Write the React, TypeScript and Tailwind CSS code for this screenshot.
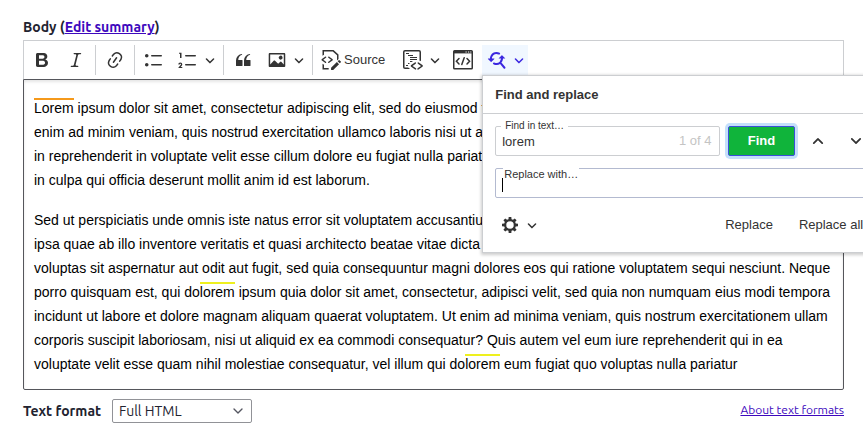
import { useState, type ReactNode } from 'react';
import clsx from 'clsx';
import { ChevronDown } from 'lucide-react';

const ICONS = {
  bold: 'M10.187 17H5.773c-.637 0-1.092-.138-1.364-.415-.273-.277-.409-.718-.409-1.323V4.738c0-.617.14-1.062.419-1.332.279-.27.73-.406 1.354-.406h4.68c.69 0 1.288.041 1.793.124.506.083.96.242 1.36.478.341.197.644.447.906.75a3.262 3.262 0 0 1 .808 2.162c0 1.401-.722 2.426-2.167 3.075C15.05 10.175 16 11.315 16 13.01a3.756 3.756 0 0 1-2.296 3.504 6.1 6.1 0 0 1-1.517.377c-.571.073-1.238.11-2 .11zm-.217-6.217H7v4.087h3.069c1.977 0 2.965-.69 2.965-2.072 0-.707-.256-1.22-.768-1.537-.512-.319-1.277-.478-2.296-.478zM7 5.13v3.619h2.606c.729 0 1.292-.067 1.69-.2a1.6 1.6 0 0 0 .91-.765c.165-.267.247-.566.247-.897 0-.707-.26-1.176-.778-1.409-.519-.232-1.31-.348-2.375-.348H7z',
  italic: 'm9.586 14.633.021.004c-.036.335.095.655.393.962.082.083.173.15.274.201h1.474a.6.6 0 1 1 0 1.2H5.304a.6.6 0 0 1 0-1.2h1.15c.474-.07.809-.182 1.005-.334.157-.122.291-.32.404-.597l2.416-9.55a1.053 1.053 0 0 0-.281-.823 1.12 1.12 0 0 0-.442-.296H8.15a.6.6 0 0 1 0-1.2h6.443a.6.6 0 1 1 0 1.2h-1.195c-.376.056-.65.155-.823.296-.215.175-.423.439-.623.79l-2.366 9.347z',
  link: 'm11.077 15 .991-1.416a.75.75 0 1 1 1.229.86l-1.148 1.64a.748.748 0 0 1-.217.206 5.251 5.251 0 0 1-8.503-5.955.741.741 0 0 1 .12-.274l1.147-1.639a.75.75 0 1 1 1.228.86L4.933 10.7l.006.003a3.75 3.75 0 0 0 6.132 4.294l.006.004zm5.494-5.335a.748.748 0 0 1-.12.274l-1.147 1.639a.75.75 0 1 1-1.228-.86l.86-1.23a3.75 3.75 0 0 0-6.144-4.301l-.86 1.229a.75.75 0 0 1-1.229-.86l1.148-1.64a.748.748 0 0 1 .217-.206 5.251 5.251 0 0 1 8.503 5.955zm-4.563-2.532a.75.75 0 0 1 .184 1.045l-3.155 4.505a.75.75 0 1 1-1.229-.86l3.155-4.506a.75.75 0 0 1 1.045-.184z',
  bullets: 'M7 5.75c0 .414.336.75.75.75h9.5a.75.75 0 1 0 0-1.5h-9.5a.75.75 0 0 0-.75.75zm-6 0C1 4.784 1.777 4 2.75 4c.966 0 1.75.777 1.75 1.75 0 .966-.777 1.75-1.75 1.75C1.784 7.5 1 6.723 1 5.75zm6 9c0 .414.336.75.75.75h9.5a.75.75 0 1 0 0-1.5h-9.5a.75.75 0 0 0-.75.75zm-6 0c0-.966.777-1.75 1.75-1.75.966 0 1.75.777 1.75 1.75 0 .966-.777 1.75-1.75 1.75-.966 0-1.75-.777-1.75-1.75z',
  numbers: 'M7 5.75c0 .414.336.75.75.75h9.5a.75.75 0 1 0 0-1.5h-9.5a.75.75 0 0 0-.75.75zM3.5 3v5H2V3.7H1v-1h2.5V3zM.343 17.857l2.59-3.257H2.92a.6.6 0 1 0-1.04 0H.302a2 2 0 1 1 3.995 0h-.001c-.048.405-.16.734-.333.988-.175.254-.59.692-1.244 1.312H4.3v1h-4l.043-.043zM7 14.75a.75.75 0 0 1 .75-.75h9.5a.75.75 0 1 1 0 1.5h-9.5a.75.75 0 0 1-.75-.75z',
  quote: 'M3 10.423a6.5 6.5 0 0 1 6.056-6.408l.038.67C6.448 5.423 5.354 7.663 5.22 10H9c.552 0 .5.432.5.986v4.511c0 .554-.448.503-1 .503h-5c-.552 0-.5-.449-.5-1.003v-4.574zm8 0a6.5 6.5 0 0 1 6.056-6.408l.038.67c-2.646.739-3.74 2.979-3.873 5.315H17c.552 0 .5.432.5.986v4.511c0 .554-.448.503-1 .503h-5c-.552 0-.5-.449-.5-1.003v-4.574z',
  image: 'M6.91 10.54c.26-.23.64-.21.88.03l3.36 3.14 2.23-2.06a.64.64 0 0 1 .87 0l2.52 2.97V4.5H3.2v10.12l3.71-4.08zm10.27-7.51c.6 0 1.09.47 1.09 1.05v11.84c0 .59-.49 1.06-1.09 1.06H2.79c-.6 0-1.09-.47-1.09-1.06V4.08c0-.58.49-1.05 1.1-1.05h14.38zm-5.22 5.56a1.96 1.96 0 1 1 3.4-1.96 1.96 1.96 0 0 1-3.4 1.96z',
  codeBlock: 'M12.87 12.61a.75.75 0 0 1-.089.976l-.085.07-3.154 2.254 3.412 2.414a.75.75 0 0 1 .237.95l-.057.095a.75.75 0 0 1-.95.237l-.096-.058-4.272-3.022-.003-1.223 4.01-2.867a.75.75 0 0 1 1.047.174zm2.795-.231.095.057 4.011 2.867-.003 1.224-4.272 3.022-.095.058a.75.75 0 0 1-.88-.151l-.07-.086-.058-.095a.75.75 0 0 1 .15-.88l.087-.07 3.412-2.414-3.154-2.253-.085-.071a.75.75 0 0 1 .862-1.207zM16 0a2 2 0 0 1 2 2v9.354l-.663-.492-.837-.001V2a.5.5 0 0 0-.5-.5H2a.5.5 0 0 0-.5.5v15a.5.5 0 0 0 .5.5h3.118L7.156 19H2a2 2 0 0 1-2-2V2a2 2 0 0 1 2-2h14zM5.009 15l.003 1H3v-1h2.009zm2.188-2-1.471 1H5v-1h2.197zM10 11v.095L8.668 12H7v-1h3zm4-2v1H7V9h7zm0-2v1H7V7h7zm-4-2v1H5V5h5zM6 3v1H3V3h3z',
  findReplace: 'm12.87 13.786 1.532-1.286 3.857 4.596a1 1 0 1 1-1.532 1.286l-3.857-4.596z M16.004 8.5a6.5 6.5 0 0 1-9.216 5.905c-1.154-.53-.863-1.415-.663-1.615.194-.194.564-.592 1.635-.141a4.5 4.5 0 0 0 5.89-5.904l-.104-.227 1.331-1.331c.045-.046.196-.041.224.007a6.47 6.47 0 0 1 .903 3.306zm-3.4-5.715c.562.305.742 1.106.354 1.494-.388.388-.995.414-1.476.178a4.5 4.5 0 0 0-6.086 5.882l.114.236-1.348 1.349c-.038.037-.17.022-.198-.023a6.5 6.5 0 0 1 5.54-9.9 6.469 6.469 0 0 1 3.1.784z M4.001 11.93.948 8.877a.2.2 0 0 1 .141-.341h6.106a.2.2 0 0 1 .141.341L4.283 11.93a.2.2 0 0 1-.282 0zm11.083-6.789 3.053 3.053a.2.2 0 0 1-.14.342H11.89a.2.2 0 0 1-.14-.342l3.052-3.053a.2.2 0 0 1 .282 0z',
  cog: 'm11.333 2 .19 2.263a5.899 5.899 0 0 1 1.458.604L14.714 3.4 16.6 5.286l-1.467 1.733c.263.452.468.942.605 1.46L18 8.666v2.666l-2.263.19a5.899 5.899 0 0 1-.604 1.458l1.467 1.733-1.886 1.886-1.733-1.467a5.899 5.899 0 0 1-1.46.605L11.334 18H8.667l-.19-2.263a5.899 5.899 0 0 1-1.458-.604L5.286 16.6 3.4 14.714l1.467-1.733a5.899 5.899 0 0 1-.604-1.458L2 11.333V8.667l2.262-.189a5.899 5.899 0 0 1 .605-1.459L3.4 5.286 5.286 3.4l1.733 1.467a5.899 5.899 0 0 1 1.46-.605L8.666 2h2.666zM10 6.267a3.733 3.733 0 1 0 0 7.466 3.733 3.733 0 0 0 0-7.466z',
};

function Icon({ name }: { name: keyof typeof ICONS }) {
  return (
    <svg viewBox="0 0 20 20" className="size-5 shrink-0" fill="currentColor" aria-hidden="true">
      <path d={ICONS[name]} />
    </svg>
  );
}

function SourceIcon() {
  return (
    <svg viewBox="0 0 20 20" className="size-5 shrink-0" fill="currentColor" aria-hidden="true">
      <path d="m12.5 0 5 4.5v4.6l-1.5 1.3V5.208L11.77 1.516 3 1.5v3.25l-1.5 1V0h11zM1.5 13.75l1.5 1v3.254L7.685 18l-.001 1.504H1.5v-5.754z" />
      <path d="M4.06 6.64a.75.75 0 0 1 .958 1.15l-.085.07L2.29 9.75l2.646 1.89c.302.216.4.62.232.951l-.058.095a.75.75 0 0 1-.951.232l-.095-.058-3.5-2.5V9.14l3.496-2.5zm4.194 6.22a.75.75 0 0 1-.958-1.149l.085-.07 2.643-1.89-2.646-1.89a.75.75 0 0 1-.232-.952l.058-.095a.75.75 0 0 1 .95-.232l.096.058 3.5 2.5v1.22l-3.496 2.5zm7.644-.836 2.122 2.122-5.825 5.809-2.125-.005.003-2.116zm2.539-1.847 1.414 1.414a.5.5 0 0 1 0 .707l-1.06 1.06-2.122-2.12 1.061-1.061a.5.5 0 0 1 .707 0z" />
    </svg>
  );
}

function EmbedIcon() {
  return (
    <svg viewBox="0 0 20 20" className="size-5 shrink-0" fill="none" stroke="currentColor" strokeWidth="1.5" aria-hidden="true">
      <rect x=".75" y=".75" width="18.5" height="18" rx=".8" />
      <path d="M1 2.2h18" strokeWidth="2.4" />
      <path d="M12.5 2h1.2M15 2h1.2M17.3 2h1" stroke="#fff" strokeWidth="1" />
      <path d="m6 8.5-2.6 2.7L6 13.9M14 8.5l2.6 2.7-2.6 2.7M11.2 7.8l-2.4 6.8" strokeLinecap="round" />
    </svg>
  );
}

function Caret() {
  return (
    <svg viewBox="0 0 10 10" className="size-2.5 shrink-0" fill="currentColor" aria-hidden="true">
      <path d="M.941 4.523a.75.75 0 1 1 1.06-1.06l3.006 3.005 3.005-3.005a.75.75 0 1 1 1.06 1.06l-3.549 3.55a.75.75 0 0 1-1.168-.136L.941 4.523z" />
    </svg>
  );
}

// Previous / next result arrow
function Arrow({ up = false }: { up?: boolean }) {
  return (
    <svg viewBox="0 0 20 20" className={clsx('size-5 shrink-0', up ? 'rotate-90' : '-rotate-90')} fill="currentColor" aria-hidden="true">
      <path d="M11.463 5.187a.888.888 0 1 1 1.254 1.255L9.16 10l3.557 3.557a.888.888 0 1 1-1.254 1.255L7.26 10.61a.888.888 0 0 1 .16-1.382l4.043-4.042z" />
    </svg>
  );
}

function ToolButton({ label, caret = false, children }: { label: string; caret?: boolean; children: ReactNode }) {
  return (
    <button type="button" aria-label={label} className={clsx('flex h-[30px] items-center rounded-xs pl-[5px]', caret ? 'pr-1' : 'pr-[5px]')}>
      {children}
      {caret && (
        <span className="ml-[7px]">
          <Caret />
        </span>
      )}
    </button>
  );
}

function Separator() {
  return <span className="my-1 w-px self-stretch bg-[#ccced1]" />;
}

function FindPanel() {
  const [find, setFind] = useState('lorem');
  const [replace, setReplace] = useState('');

  return (
    <form
      className="absolute left-0 top-full z-10 w-[402px] border border-[#ccced1] bg-white text-[13px] text-[#333] shadow-[0_1px_3px_1px_rgba(0,0,0,0.2)]"
      onSubmit={(e) => e.preventDefault()}
    >
      <h2 className="flex h-[38px] items-center border-b border-[#ccced1] px-3 font-bold">Find and replace</h2>

      <div className="flex flex-col gap-3 p-3">
        <div className="flex items-center gap-2">
          <div className="relative w-[225px]">
            <label htmlFor="find" className="absolute -top-2 left-1.5 bg-white px-1 text-[10px] leading-4">
              Find in text…
            </label>
            <input
              id="find"
              value={find}
              onChange={(e) => setFind(e.target.value)}
              className="h-[30px] w-full rounded-xs border border-[#ccced1] px-1.5 outline-none"
            />
            <span className="pointer-events-none absolute right-2 top-0 leading-[30px] text-[#c4c4c4]">1 of 4</span>
          </div>
          <button
            type="submit"
            className="h-[30px] w-[68px] rounded-xs border border-[#3a4fd8] bg-[#10b43b] font-bold text-white shadow-[0_0_0_3px_#c5dffa]"
          >
            Find
          </button>
          <button type="button" aria-label="Previous result" className="flex size-[30px] items-center justify-center">
            <Arrow up />
          </button>
          <button type="button" aria-label="Next result" className="flex size-[30px] items-center justify-center">
            <Arrow />
          </button>
        </div>

        <div className="relative">
          <label htmlFor="replace" className="absolute -top-0.5 left-2 bg-white px-px text-[11px] leading-4">
            Replace with…
          </label>
          <input
            id="replace"
            value={replace}
            onChange={(e) => setReplace(e.target.value)}
            className="h-[30px] w-full rounded-xs border border-[#b3bad0] px-1.5 outline-none"
          />
          <span className="pointer-events-none absolute left-[7px] top-2.5 h-3.5 w-px bg-black" />
        </div>

        <div className="flex items-center">
          <ToolButton label="Show options" caret>
            <Icon name="cog" />
          </ToolButton>
          <button type="button" className="ml-auto h-[30px] px-2">
            Replace
          </button>
          <button type="button" className="ml-2.5 h-[30px] px-2">
            Replace all
          </button>
        </div>
      </div>
    </form>
  );
}

function Match({ current = false, children }: { current?: boolean; children: ReactNode }) {
  return (
    <mark className={clsx('border-t-2 bg-transparent text-inherit', current ? 'border-[#f5991b]' : 'border-[#eef01e]')}>
      {children}
    </mark>
  );
}

export default function App() {
  return (
    <main className="min-h-screen overflow-x-hidden bg-white pb-5 pl-[23px] pr-[19px] pt-4 font-['Ubuntu','Noto_Sans',sans-serif] text-[#222330]">
      <div id="body-label" className="pb-0.5 text-[14px] font-bold leading-[22px]">
        Body (
        <a href="#summary" className="text-[#3d08bd] underline">
          Edit summary
        </a>
        )
      </div>

      <div className="font-['Liberation_Sans',Arial,sans-serif] text-[#333]">
        <div role="toolbar" aria-label="Editor toolbar" className="flex h-[39px] items-center gap-1 border border-b-0 border-[#ccced1] pl-[3px]">
          <ToolButton label="Bold">
            <Icon name="bold" />
          </ToolButton>
          <ToolButton label="Italic">
            <Icon name="italic" />
          </ToolButton>
          <Separator />
          <ToolButton label="Link">
            <Icon name="link" />
          </ToolButton>
          <Separator />
          <ToolButton label="Bulleted list">
            <Icon name="bullets" />
          </ToolButton>
          <ToolButton label="Numbered list" caret>
            <Icon name="numbers" />
          </ToolButton>
          <Separator />
          <ToolButton label="Block quote">
            <Icon name="quote" />
          </ToolButton>
          <ToolButton label="Insert image" caret>
            <Icon name="image" />
          </ToolButton>
          <Separator />
          <button type="button" className="flex h-[30px] items-center gap-[3px] pl-1 pr-[9px] text-[13px]">
            <SourceIcon />
            Source
          </button>
          <ToolButton label="Insert code block" caret>
            <Icon name="codeBlock" />
          </ToolButton>
          <ToolButton label="Insert HTML">
            <EmbedIcon />
          </ToolButton>
          <div className="relative">
            <div className="bg-[#f0f7ff] text-[#3b27e0]">
              <ToolButton label="Find and replace" caret>
                <Icon name="findReplace" />
              </ToolButton>
            </div>
            <FindPanel />
          </div>
        </div>

        <div
          role="textbox"
          aria-multiline="true"
          aria-labelledby="body-label"
          contentEditable
          suppressContentEditableWarning
          className="space-y-4 rounded-b-xs border border-[#55565b] px-2.5 pb-[13px] pt-4 text-[14px] leading-6 text-black shadow-[inset_0_2px_3px_rgba(0,0,0,0.1)] outline-none"
        >
          <p>
            <Match current>Lorem</Match> ipsum dolor sit amet, consectetur adipiscing elit, sed do eiusmod tempor incididunt ut
            labore et dolore magna aliqua. Ut enim ad minim veniam, quis nostrud exercitation ullamco laboris nisi ut aliquip
            ex ea commodo consequat. Duis aute irure dolor in reprehenderit in voluptate velit esse cillum dolore eu fugiat
            nulla pariatur. Excepteur sint occaecat cupidatat non proident, sunt in culpa qui officia deserunt mollit anim id
            est laborum.
          </p>
          <p>
            Sed ut perspiciatis unde omnis iste natus error sit voluptatem accusantium doloremque laudantium, totam rem
            aperiam, eaque ipsa quae ab illo inventore veritatis et quasi architecto beatae vitae dicta sunt explicabo. Nemo
            enim ipsam voluptatem quia voluptas sit aspernatur aut odit aut fugit, sed quia consequuntur magni dolores eos qui
            ratione voluptatem sequi nesciunt. Neque porro quisquam est, qui do<Match>lorem</Match> ipsum quia dolor sit amet,
            consectetur, adipisci velit, sed quia non numquam eius modi tempora incidunt ut labore et dolore magnam aliquam
            quaerat voluptatem. Ut enim ad minima veniam, quis nostrum exercitationem ullam corporis suscipit laboriosam, nisi
            ut aliquid ex ea commodi consequatur? Quis autem vel eum iure reprehenderit qui in ea voluptate velit esse quam
            nihil molestiae consequatur, vel illum qui do<Match>lorem</Match> eum fugiat quo voluptas nulla pariatur
          </p>
        </div>
      </div>

      <div className="mt-[9px] flex items-center">
        <label htmlFor="format" className="text-[14px] font-bold">
          Text format
        </label>
        <div className="relative ml-[11px]">
          <select id="format" className="block h-6 w-[140px] appearance-none rounded-xs border border-[#919297] bg-white px-1.5 text-[14px]">
            <option>Full HTML</option>
          </select>
          <ChevronDown className="pointer-events-none absolute right-1.5 top-1 size-4 text-[#545560]" strokeWidth={2} />
        </div>
        <a href="#formats" className="-mt-0.5 ml-auto text-[12px] text-[#3d08bd] underline">
          About text formats
        </a>
      </div>
    </main>
  );
}
